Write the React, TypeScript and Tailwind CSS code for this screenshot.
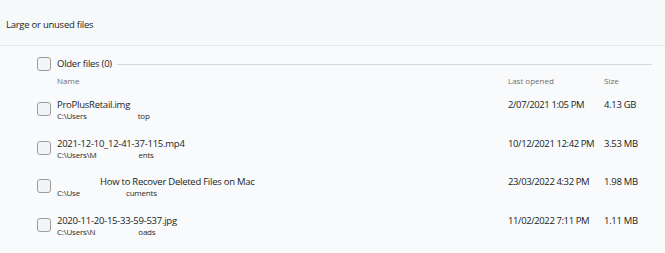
import React from "react";

const font = { fontFamily: '"Open Sans", "Noto Sans", sans-serif' };

function Box() {
  return <div className="w-[14px] h-[14px] rounded-[3px] border border-[#9c9c9c] bg-[#f3f4f5] shrink-0" />;
}

type Row = { name: string; nameX?: number; path: React.ReactNode; date: string; size: string };

const rows: Row[] = [
  {
    name: "ProPlusRetail.img",
    path: (
      <>
        <span>C:\Users</span>
        <span className="ml-[51px]">top</span>
      </>
    ),
    date: "2/07/2021 1:05 PM",
    size: "4.13 GB",
  },
  {
    name: "2021-12-10_12-41-37-115.mp4",
    path: (
      <>
        <span>C:\Users\M</span>
        <span className="ml-[42px]">ents</span>
      </>
    ),
    date: "10/12/2021 12:42 PM",
    size: "3.53 MB",
  },
  {
    name: "How to Recover Deleted Files on Mac",
    nameX: 43,
    path: (
      <>
        <span>C:\Use</span>
        <span className="ml-[46px]">cuments</span>
      </>
    ),
    date: "23/03/2022 4:32 PM",
    size: "1.98 MB",
  },
  {
    name: "2020-11-20-15-33-59-537.jpg",
    path: (
      <>
        <span>C:\Users\N</span>
        <span className="ml-[43px]">oads</span>
      </>
    ),
    date: "11/02/2022 7:11 PM",
    size: "1.11 MB",
  },
];

export default function App() {
  return (
    <div className="w-[665px] h-[253px] bg-[#f8fafb] text-[#1c1c1c] overflow-hidden whitespace-nowrap" style={font}>
      <div className="h-[46px] border-b border-[#e3e8ea] bg-[#f6f9fa] flex items-center pt-[5px] pl-[6px] text-[9.5px] leading-[12px] tracking-[-0.25px]">
        Large or unused files
      </div>
      <div className="pl-[37px] pr-[13px]">
        <div className="flex items-center h-[14px] mt-[11px]">
          <Box />
          <span className="ml-[6px] text-[9.5px] leading-[12px] tracking-[-0.25px]">Older files (0)</span>
          <div className="flex-1 h-px bg-[#d5d9db] ml-[5px]" />
        </div>
        <div className="flex h-[10px] mt-[5px] text-[8px] leading-[10px] text-[#6f6f6f]">
          <span className="ml-[20px] w-[451px]">Name</span>
          <span className="w-[96px]">Last opened</span>
          <span>Size</span>
        </div>
        <div className="mt-[13px] flex flex-col">
          {rows.map((r, i) => (
            <div key={i} className="flex h-[38.6px]">
              <div className="pt-[3px]">
                <Box />
              </div>
              <div className="ml-[6px] w-[451px] flex flex-col">
                <div
                  className="text-[9.5px] leading-[12px] tracking-[-0.25px]"
                  style={r.nameX ? { marginLeft: r.nameX } : undefined}
                >
                  {r.name}
                </div>
                <div className="text-[8px] leading-[10px] tracking-[-0.2px] text-[#2a2a2a] flex">{r.path}</div>
              </div>
              <div className="w-[96px] text-[9.5px] leading-[12px] tracking-[-0.4px]">{r.date}</div>
              <div className="text-[9.5px] leading-[12px] tracking-[-0.3px]">{r.size}</div>
            </div>
          ))}
        </div>
      </div>
    </div>
  );
}
